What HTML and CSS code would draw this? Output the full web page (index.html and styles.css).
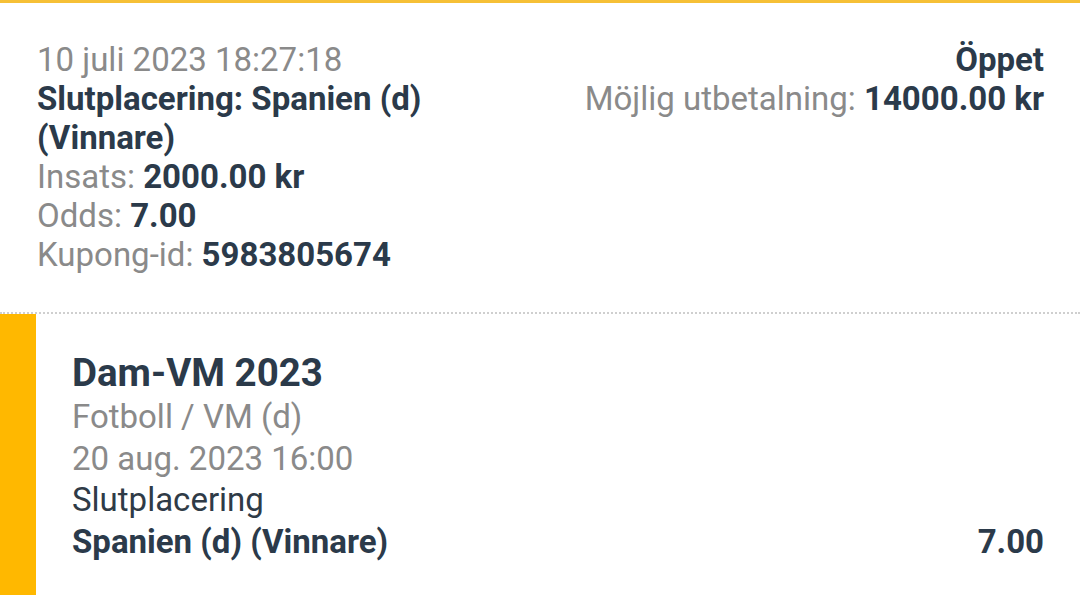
FILE: index.html
```html
<!DOCTYPE html>
<html lang="sv">

<head>
    <meta charset="utf-8" />
    <meta name="viewport" content="width=device-width, initial-scale=1" />

    <title>Kupong 5983805674</title>

    <link rel="stylesheet" href="styles.css">
</head>

<body>
    <main class="coupon">
        <header class="summary">
            <div class="summary-info">
                <div class="muted">10 juli 2023 18:27:18</div>
                <div class="strong">Slutplacering: Spanien (d) (Vinnare)</div>
                <div class="muted">Insats: <b class="strong">2000.00 kr</b></div>
                <div class="muted">Odds: <b class="strong">7.00</b></div>
                <div class="muted">Kupong-id: <b class="strong">5983805674</b></div>
            </div>
            <div class="summary-status">
                <div class="strong">Öppet</div>
                <div class="muted">Möjlig utbetalning: <b class="strong">14000.00 kr</b></div>
            </div>
        </header>

        <section class="selection">
            <h2 class="event">Dam-VM 2023</h2>
            <div class="muted">Fotboll / VM (d)</div>
            <div class="muted">20 aug. 2023 16:00</div>
            <div class="market">Slutplacering</div>
            <div class="pick">
                <span>Spanien (d) (Vinnare)</span>
                <span>7.00</span>
            </div>
        </section>
    </main>
</body>

</html>
```

FILE: styles.css
```css
html {
    font-family: Roboto, 'Noto Sans', sans-serif;
    font-size: 33px;
    line-height: 39px;
    color: #2b3a4a;
    background: #fff;
}

body {
    margin: 0;
}

div,
h2 {
    margin: 0;
    padding: 0;
}

b,
.strong {
    font-weight: 700;
    color: #2b3a4a;
}

.muted {
    color: #8a8a8a;
}

.coupon {
    border-top: 3px solid #f6c036;
}

.summary {
    display: flex;
    gap: 48px;
    padding: 37px 36px 38px 37px;
    border-bottom: 2px dotted #cfcfcf;
}

.summary-info {
    flex: 1;
}

.summary-status {
    flex: none;
    text-align: right;
}

.selection {
    border-left: 36px solid #ffb800;
    padding: 36px 36px 40px 36px;
    line-height: 41.5px;
}

.event {
    font-size: 38.5px;
    line-height: 46px;
    font-weight: 700;
    color: #2b3a4a;
}

.market {
    color: #2f3b47;
}

.pick {
    display: flex;
    justify-content: space-between;
    font-weight: 700;
}
```
